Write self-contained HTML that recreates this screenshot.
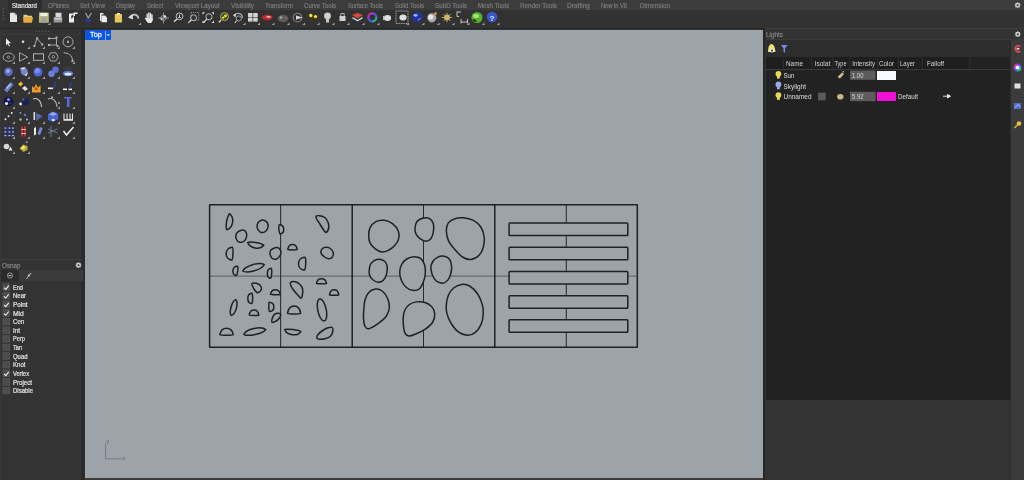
<!DOCTYPE html>
<html><head><meta charset="utf-8">
<style>
*{margin:0;padding:0;box-sizing:border-box}
html,body{width:1024px;height:480px;overflow:hidden;background:#333333;font-family:"Liberation Sans",sans-serif}
.abs{position:absolute}
#tabbar{left:0;top:0;width:1024px;height:10px;background:#3c3c3c}
#tabbar span{position:absolute;top:2.2px;font-size:7px;line-height:8px;white-space:nowrap;transform-origin:0 0;-webkit-text-stroke:0.2px currentColor}
#activetab{left:8.3px;top:0;width:33.5px;height:10px;background:#2e2e2e}
#tableft{left:0;top:0;width:8.3px;height:10px;background:#373737}
.t{position:absolute;font-size:7px;line-height:8px;white-space:nowrap;color:#d8d8d8;transform-origin:0 0;-webkit-text-stroke:0.15px currentColor}
#root{position:absolute;left:0;top:0;width:1024px;height:480px;overflow:hidden;will-change:transform}

</style></head><body><div id="root">
<div id="tabbar" class="abs"><div id="tableft" class="abs"></div><div id="activetab" class="abs"></div>
<span style="left:12px;color:#e0e0e0;transform:scaleX(0.880)">Standard</span>
<span style="left:48px;color:#7c7c7c;transform:scaleX(0.792)">CPlanes</span>
<span style="left:80px;color:#7c7c7c;transform:scaleX(0.909)">Set View</span>
<span style="left:116px;color:#7c7c7c;transform:scaleX(0.826)">Display</span>
<span style="left:147px;color:#7c7c7c;transform:scaleX(0.821)">Select</span>
<span style="left:175px;color:#7c7c7c;transform:scaleX(0.888)">Viewport Layout</span>
<span style="left:231px;color:#7c7c7c;transform:scaleX(0.913)">Visibility</span>
<span style="left:265px;color:#7c7c7c;transform:scaleX(0.886)">Transform</span>
<span style="left:304px;color:#7c7c7c;transform:scaleX(0.870)">Curve Tools</span>
<span style="left:348px;color:#7c7c7c;transform:scaleX(0.827)">Surface Tools</span>
<span style="left:395px;color:#7c7c7c;transform:scaleX(0.861)">Solid Tools</span>
<span style="left:435px;color:#7c7c7c;transform:scaleX(0.896)">SubD Tools</span>
<span style="left:478px;color:#7c7c7c;transform:scaleX(0.878)">Mesh Tools</span>
<span style="left:520px;color:#7c7c7c;transform:scaleX(0.900)">Render Tools</span>
<span style="left:567px;color:#7c7c7c;transform:scaleX(0.939)">Drafting</span>
<span style="left:601px;color:#7c7c7c;transform:scaleX(0.815)">New in V8</span>
<span style="left:640px;color:#7c7c7c;transform:scaleX(0.906)">Dimension</span>
</div>
<div class="abs" style="left:0;top:10px;width:1024px;height:18.5px;background:#323232"></div>
<div class="abs" style="left:0;top:28px;width:765px;height:1.2px;background:#272727"></div>
<div class="abs" style="left:765px;top:28px;width:259px;height:1.2px;background:#3d3d3d"></div>
<!-- left panel -->
<div class="abs" style="left:0;top:29px;width:83px;height:451px;background:#333333"></div>
<div class="abs" style="left:0;top:29px;width:1px;height:451px;background:#383838"></div>
<div class="abs" style="left:80.5px;top:29px;width:4.5px;height:451px;background:#2b2b2b"></div>
<div class="abs" style="left:1px;top:34.2px;width:79px;height:0.8px;background:#3a3a3a"></div>
<div class="abs" style="left:0;top:258.5px;width:83px;height:1px;background:#3d3d3d"></div>
<div class="t" style="left:2px;top:261.5px;color:#8a8a8a;transform:scaleX(0.9)">Osnap</div>
<div class="abs" style="left:1px;top:270px;width:18px;height:11px;background:#2b2b2b"></div>
<div class="abs" style="left:19px;top:270px;width:64px;height:11px;background:#3b3b3b"></div>
<!-- osnap list -->
<div id="osnap"></div>
<!-- viewport -->
<div class="abs" style="left:85px;top:29.6px;width:678.2px;height:448px;background:#9ca3a9"></div>
<div class="abs" style="left:85px;top:477.6px;width:678.2px;height:2.4px;background:#3a3a3a"></div>
<div class="abs" style="left:763.2px;top:29px;width:2.3px;height:451px;background:#262626"></div>
<div class="abs" style="left:85.3px;top:29.6px;width:25.8px;height:10.4px;background:#0b56e2;border-radius:0 0 1px 1px"></div>
<svg class="abs" style="left:0;top:0" width="120" height="45"><path d="M106.6 34.3 H110 L108.3 36.2 Z" fill="#e8f0ff"/></svg>
<div class="t" style="left:89.8px;top:30.8px;color:#e8efff;font-size:7.5px;transform:scaleX(0.98);-webkit-text-stroke:0.3px #e8efff">Top</div>
<div class="abs" style="left:105px;top:30.5px;width:0.7px;height:9px;background:#8fb0f0"></div>
<!-- right panel -->
<div class="abs" style="left:765.5px;top:29px;width:258.5px;height:11px;background:#333333"></div>
<div class="t" style="left:765.5px;top:30.5px;color:#8a8a8a;transform:scaleX(0.9)">Lights</div>
<div class="abs" style="left:765.5px;top:39.3px;width:258.5px;height:1px;background:#3c3c3c"></div>
<div class="abs" style="left:765.5px;top:40.3px;width:244.5px;height:17px;background:#2d2d2d"></div>
<div class="abs" style="left:765.5px;top:57.3px;width:244.5px;height:343px;background:#222222"></div>
<div class="abs" style="left:765.5px;top:57.3px;width:204px;height:12px;background:#1e1e1e"></div>
<div class="abs" style="left:765.5px;top:69.3px;width:244.5px;height:0.8px;background:#3a3a3a"></div>
<div class="abs" style="left:765.5px;top:400.3px;width:244.5px;height:80px;background:#333333"></div>
<div class="abs" style="left:1009.5px;top:40.3px;width:1.5px;height:440px;background:#2a2a2a"></div>
<div class="abs" style="left:1011px;top:40.3px;width:13px;height:440px;background:#3b3b3b"></div>
<div id="lights"></div>

<svg class="abs" style="left:0;top:0" width="1024" height="480" viewBox="0 0 1024 480">
<line x1="209.6" y1="276" x2="637.3" y2="276" stroke="#666c72" stroke-width="1.25"/>
<g stroke="#272c31" stroke-width="1.05" fill="none">
<line x1="280.6" y1="204.8" x2="280.6" y2="347.2"/>
<line x1="423.5" y1="204.8" x2="423.5" y2="347.2"/>
<line x1="566.3" y1="204.8" x2="566.3" y2="347.2"/>
</g>
<g stroke="#1d2227" stroke-width="1.5" fill="#9ca3a9" stroke-linejoin="round">
<rect x="209.6" y="204.8" width="427.7" height="142.45" fill="none"/>
<line x1="352.2" y1="204.8" x2="352.2" y2="347.25"/>
<line x1="494.8" y1="204.8" x2="494.8" y2="347.25"/>
<path d="M229.55 213.7 C227.01 216.56 225.3 226.19 226.7 229.75 C233.18 227.59 234.89 217.96 229.55 213.7 Z"/>
<path d="M238.25 231.7 C239.37 230.92 241.42 229.95 242.75 230.05 C244.07 230.15 245.57 231.17 246.2 232.3 C246.82 233.42 246.82 235.35 246.5 236.8 C246.17 238.25 245.42 240.1 244.25 241 C243.07 241.9 240.8 242.57 239.45 242.2 C238.1 241.82 236.72 240 236.15 238.75 C235.57 237.5 235.65 235.87 236 234.7 C236.35 233.52 237.12 232.47 238.25 231.7 Z"/>
<path d="M259.7 221.2 C260.77 220.47 262.45 219.85 263.75 220.15 C265.05 220.45 266.8 221.82 267.5 223 C268.2 224.17 268.25 225.82 267.95 227.2 C267.65 228.57 266.82 230.37 265.7 231.25 C264.57 232.12 262.55 232.82 261.2 232.45 C259.85 232.07 258.25 230.32 257.6 229 C256.95 227.67 256.95 225.8 257.3 224.5 C257.65 223.2 258.62 221.92 259.7 221.2 Z"/>
<path d="M247.7 242.5 C249.98 248.56 259.61 250.18 263.75 245.2 C260.83 242.95 251.2 241.33 247.7 242.5 Z"/>
<path d="M232.5 247.3 C224.48 247.51 223.85 259.12 231.8 260.2 C232.9 259.61 233.53 248 232.5 247.3 Z"/>
<path d="M272.75 248.8 C273.87 248.27 275.95 247.32 277.25 247.6 C278.55 247.87 280.05 249.17 280.55 250.45 C281.05 251.72 280.92 253.82 280.25 255.25 C279.57 256.67 277.87 258.5 276.5 259 C275.12 259.5 273.07 259.05 272 258.25 C270.92 257.45 270.3 255.45 270.05 254.2 C269.8 252.95 270.05 251.65 270.5 250.75 C270.95 249.85 271.62 249.32 272.75 248.8 Z"/>
<path d="M242.75 271 C247.09 273.89 262.11 269.48 264.2 264.7 C259.74 261.42 244.73 265.83 242.75 271 Z"/>
<path d="M237.5 266.2 C232.15 265.98 231.07 274.35 236.3 275.5 C237.42 275.17 238.5 266.8 237.5 266.2 Z"/>
<path d="M271.2 268.3 C266.51 268.47 265.88 277.47 270.5 278.3 C271.6 277.87 272.23 268.87 271.2 268.3 Z"/>
<path d="M279.3 224.8 C278.28 225.36 279.09 233.64 280.2 234 C285.46 233.02 284.65 224.74 279.3 224.8 Z"/>
<path d="M316 216.25 C316.5 215.67 318.25 215.55 319.75 215.8 C321.25 216.05 323.62 216.67 325 217.75 C326.37 218.82 327.37 220.62 328 222.25 C328.62 223.87 329.05 225.8 328.75 227.5 C328.45 229.2 327.07 232.07 326.2 232.45 C325.32 232.82 324.57 231.2 323.5 229.75 C322.42 228.3 320.87 225.5 319.75 223.75 C318.62 222 317.37 220.5 316.75 219.25 C316.12 218 315.5 216.82 316 216.25 Z"/>
<path d="M287.8 249.4 C288.75 250.07 296.31 250.07 297.25 249.4 C296.31 242.73 288.75 242.73 287.8 249.4 Z"/>
<path d="M322.3 248.8 C323.1 247.9 324.42 247.35 325.75 247.3 C327.07 247.25 329 247.6 330.25 248.5 C331.5 249.4 332.92 251.25 333.25 252.7 C333.57 254.15 332.95 256.2 332.2 257.2 C331.45 258.2 330.07 258.77 328.75 258.7 C327.42 258.62 325.55 257.75 324.25 256.75 C322.95 255.75 321.27 254.02 320.95 252.7 C320.62 251.37 321.5 249.7 322.3 248.8 Z"/>
<path d="M304.8 257.3 C296.78 257.57 296.24 269.18 304.2 270.2 C305.83 269.63 306.37 258.02 304.8 257.3 Z"/>
<path d="M252.05 283.55 C252.62 282.97 254.92 282.97 256.25 283.25 C257.57 283.52 259.12 284.32 260 285.2 C260.87 286.07 261.5 287.45 261.5 288.5 C261.5 289.55 260.7 290.8 260 291.5 C259.3 292.2 258.17 292.95 257.3 292.7 C256.42 292.45 255.5 291 254.75 290 C254 289 253.25 287.77 252.8 286.7 C252.35 285.62 251.47 284.12 252.05 283.55 Z"/>
<path d="M270.5 294.2 C271.46 294.89 279.26 295.05 280.25 294.4 C279.4 288.25 271.6 288.09 270.5 294.2 Z"/>
<path d="M251.8 293.3 C246.47 293.81 246.47 302.99 251.8 303.5 C252.87 302.99 252.87 293.81 251.8 293.3 Z"/>
<path d="M235.7 299.6 C231.82 301.1 228.67 312.3 231.2 315.6 C235.73 314.28 238.88 303.08 235.7 299.6 Z"/>
<path d="M269.2 302.3 C268.42 302.8 268.78 311.17 269.6 311.6 C275.57 310.88 275.21 302.51 269.2 302.3 Z"/>
<path d="M249.2 315 C250.15 315.68 257.83 315.76 258.8 315.1 C257.91 308.42 250.23 308.34 249.2 315 Z"/>
<path d="M272 322.25 C271.37 321.62 272.25 318.37 272.75 317 C273.25 315.62 274 314.62 275 314 C276 313.37 277.8 313.12 278.75 313.25 C279.7 313.37 280.57 314 280.7 314.75 C280.82 315.5 280.2 316.75 279.5 317.75 C278.8 318.75 277.75 320 276.5 320.75 C275.25 321.5 272.62 322.87 272 322.25 Z"/>
<path d="M219.8 334.6 C221.42 335.4 231.68 335.4 233.3 334.6 C231.68 326.2 221.42 326.2 219.8 334.6 Z"/>
<path d="M243.8 334.3 C247.81 336.98 263.14 333.69 265.7 329.6 C261.41 325.61 246.08 328.9 243.8 334.3 Z"/>
<path d="M290.5 282.5 C291.2 281.87 293.5 281.5 295 281.75 C296.5 282 298.25 282.87 299.5 284 C300.75 285.12 302 286.75 302.5 288.5 C303 290.25 302.75 292.87 302.5 294.5 C302.25 296.12 301.75 298.12 301 298.25 C300.25 298.37 299.25 296.62 298 295.25 C296.75 293.87 294.7 291.62 293.5 290 C292.3 288.37 291.3 286.75 290.8 285.5 C290.3 284.25 289.8 283.12 290.5 282.5 Z"/>
<path d="M316.5 283.3 C317.5 283.97 325.5 283.97 326.5 283.3 C325.5 277.17 317.5 277.17 316.5 283.3 Z"/>
<path d="M329.5 294.8 C330.43 295.47 337.87 295.47 338.8 294.8 C337.87 288.13 330.43 288.13 329.5 294.8 Z"/>
<path d="M326.11 309.03 L326.38 310.46 L326.57 311.89 L326.69 313.29 L326.72 314.62 L326.68 315.88 L326.55 317.03 L326.35 318.06 L326.07 318.95 L325.72 319.69 L325.31 320.26 L324.84 320.65 L324.33 320.86 L323.77 320.88 L323.19 320.71 L322.58 320.36 L321.96 319.82 L321.35 319.12 L320.74 318.26 L320.16 317.26 L319.61 316.13 L319.1 314.9 L318.63 313.58 L318.23 312.2 L317.89 310.77 L317.62 309.34 L317.43 307.91 L317.31 306.51 L317.28 305.18 L317.32 303.92 L317.45 302.77 L317.65 301.74 L317.93 300.85 L318.28 300.11 L318.69 299.54 L319.16 299.15 L319.67 298.94 L320.23 298.92 L320.81 299.09 L321.42 299.44 L322.04 299.98 L322.65 300.68 L323.26 301.54 L323.84 302.54 L324.39 303.67 L324.9 304.9 L325.37 306.22 L325.77 307.6 Z"/>
<path d="M287.5 313.3 C289.08 314.1 299.12 314.1 300.7 313.3 C299.12 303.7 289.08 303.7 287.5 313.3 Z"/>
<path d="M284.8 329.5 C286.47 335.37 297.67 336.84 300.8 331.6 C298.57 329.96 287.37 328.49 284.8 329.5 Z"/>
<path d="M316.75 338 C316.5 337.17 317.25 335.5 318.25 334.25 C319.25 333 321.12 331.57 322.75 330.5 C324.37 329.42 326.42 328.3 328 327.8 C329.57 327.3 331.4 326.92 332.2 327.5 C333 328.07 333.12 329.75 332.8 331.25 C332.47 332.75 331.55 335.25 330.25 336.5 C328.95 337.75 326.75 338.3 325 338.75 C323.25 339.2 321.12 339.32 319.75 339.2 C318.37 339.07 317 338.82 316.75 338 Z"/>
<path d="M368.67 235.33 C368.67 232.83 368.81 230.11 370 227.83 C371.19 225.56 373.47 222.92 375.83 221.67 C378.19 220.42 381.39 220 384.17 220.33 C386.94 220.67 390.14 221.86 392.5 223.67 C394.86 225.47 397.31 228.67 398.33 231.17 C399.36 233.67 399.22 236.31 398.67 238.67 C398.11 241.03 396.72 243.39 395 245.33 C393.28 247.28 390.56 249.22 388.33 250.33 C386.11 251.44 383.89 252.28 381.67 252 C379.44 251.72 376.94 250.19 375 248.67 C373.06 247.14 371.06 245.06 370 242.83 C368.94 240.61 368.67 237.83 368.67 235.33 Z"/>
<path d="M415 228.67 C415.14 226.72 415.42 223.72 416.67 222 C417.92 220.28 420.42 218.94 422.5 218.33 C424.58 217.72 427.36 217.44 429.17 218.33 C430.97 219.22 432.64 221.39 433.33 223.67 C434.03 225.94 433.75 229.5 433.33 232 C432.92 234.5 432.08 237.14 430.83 238.67 C429.58 240.19 427.64 241.17 425.83 241.17 C424.03 241.17 421.67 239.92 420 238.67 C418.33 237.42 416.67 235.33 415.83 233.67 C415 232 414.86 230.61 415 228.67 Z"/>
<path d="M369.17 270.33 C369.36 268.39 369.58 265.47 370.83 263.67 C372.08 261.86 374.58 260.06 376.67 259.5 C378.75 258.94 381.61 259.36 383.33 260.33 C385.06 261.31 386.44 263.11 387 265.33 C387.56 267.56 387.28 271.17 386.67 273.67 C386.06 276.17 384.72 278.89 383.33 280.33 C381.94 281.78 380.14 282.47 378.33 282.33 C376.53 282.19 373.94 280.67 372.5 279.5 C371.06 278.33 370.22 276.86 369.67 275.33 C369.11 273.81 368.97 272.28 369.17 270.33 Z"/>
<path d="M399.67 272 C399.72 269.36 400.5 266.67 401.67 264.5 C402.83 262.33 404.58 260.31 406.67 259 C408.75 257.69 411.81 256.72 414.17 256.67 C416.53 256.61 419.08 257.22 420.83 258.67 C422.58 260.11 423.92 262.83 424.67 265.33 C425.42 267.83 425.56 270.89 425.33 273.67 C425.11 276.44 424.36 279.44 423.33 282 C422.31 284.56 420.97 287.61 419.17 289 C417.36 290.39 414.72 290.67 412.5 290.33 C410.28 290 407.69 288.67 405.83 287 C403.97 285.33 402.36 282.83 401.33 280.33 C400.31 277.83 399.61 274.64 399.67 272 Z"/>
<path d="M446.33 230.33 C446.33 227.42 446.89 224.78 448.33 222.83 C449.78 220.89 452.5 219.5 455 218.67 C457.5 217.83 460.28 217.56 463.33 217.83 C466.39 218.11 470.42 218.81 473.33 220.33 C476.25 221.86 479.03 224.22 480.83 227 C482.64 229.78 483.75 233.67 484.17 237 C484.58 240.33 484.17 243.94 483.33 247 C482.5 250.06 481.25 253.25 479.17 255.33 C477.08 257.42 473.61 259.22 470.83 259.5 C468.06 259.78 465.28 258.81 462.5 257 C459.72 255.19 456.53 251.44 454.17 248.67 C451.81 245.89 449.64 243.39 448.33 240.33 C447.03 237.28 446.33 233.25 446.33 230.33 Z"/>
<path d="M430.83 268.67 C430.56 265.89 431.39 263.89 432.5 262 C433.61 260.11 435.56 258.31 437.5 257.33 C439.44 256.36 442.14 255.81 444.17 256.17 C446.19 256.53 448.42 257.69 449.67 259.5 C450.92 261.31 451.61 264.22 451.67 267 C451.72 269.78 450.97 273.67 450 276.17 C449.03 278.67 447.5 280.89 445.83 282 C444.17 283.11 441.94 283.39 440 282.83 C438.06 282.28 435.69 281.03 434.17 278.67 C432.64 276.31 431.11 271.44 430.83 268.67 Z"/>
<path d="M363.75 310 C364 306.88 364.17 302.92 365 300 C365.83 297.08 366.98 294.33 368.75 292.5 C370.52 290.67 373.33 289.21 375.62 289 C377.92 288.79 380.48 289.62 382.5 291.25 C384.52 292.88 386.6 296.04 387.75 298.75 C388.9 301.46 389.62 304.58 389.38 307.5 C389.12 310.42 388.02 313.65 386.25 316.25 C384.48 318.85 381.67 321.04 378.75 323.12 C375.83 325.21 371.04 328.23 368.75 328.75 C366.46 329.27 365.88 327.92 365 326.25 C364.12 324.58 363.71 321.46 363.5 318.75 C363.29 316.04 363.5 313.12 363.75 310 Z"/>
<path d="M403.12 320 C403.06 316.46 403.44 313.75 404.38 311.25 C405.31 308.75 406.77 306.56 408.75 305 C410.73 303.44 413.54 302.29 416.25 301.88 C418.96 301.46 422.4 301.67 425 302.5 C427.6 303.33 430.25 305 431.88 306.88 C433.5 308.75 434.65 311.15 434.75 313.75 C434.85 316.35 434.12 319.9 432.5 322.5 C430.88 325.1 427.71 327.5 425 329.38 C422.29 331.25 418.96 332.65 416.25 333.75 C413.54 334.85 410.67 336.21 408.75 336 C406.83 335.79 405.69 335.17 404.75 332.5 C403.81 329.83 403.19 323.54 403.12 320 Z"/>
<path d="M446.33 304.67 C446.6 301.78 447.11 298.11 448.33 295.33 C449.56 292.56 451.44 289.82 453.67 288 C455.89 286.18 459 284.73 461.67 284.4 C464.33 284.07 467 284.4 469.67 286 C472.33 287.6 475.56 290.89 477.67 294 C479.78 297.11 481.4 301.33 482.33 304.67 C483.27 308 483.49 310.67 483.27 314 C483.04 317.33 482.38 321.56 481 324.67 C479.62 327.78 477.33 330.89 475 332.67 C472.67 334.44 469.89 335.56 467 335.33 C464.11 335.11 460.44 333.56 457.67 331.33 C454.89 329.11 452.16 325.11 450.33 322 C448.51 318.89 447.4 315.56 446.73 312.67 C446.07 309.78 446.07 307.56 446.33 304.67 Z"/>
<rect x="509.1" y="223.0" width="118.7" height="12.5" rx="0.8"/>
<rect x="509.1" y="247.3" width="118.7" height="12.5" rx="0.8"/>
<rect x="509.1" y="271.5" width="118.7" height="12.5" rx="0.8"/>
<rect x="509.1" y="295.7" width="118.7" height="12.5" rx="0.8"/>
<rect x="509.1" y="319.8" width="118.7" height="12.5" rx="0.8"/>
</g>
<g stroke="#6a7076" stroke-width="0.8" fill="none"><polyline points="105.6,443.5 105.6,458.8 121.3,458.8"/></g>
<text x="106.3" y="442.5" font-size="6" fill="#60666c" font-family="Liberation Sans">y</text>
<text x="122.2" y="459.8" font-size="6" fill="#60666c" font-family="Liberation Sans">x</text>
</svg>
<svg class="abs" style="left:0;top:0" width="1024" height="480" viewBox="0 0 1024 480">
<defs><linearGradient id="cw" x1="0" y1="0" x2="1" y2="1"><stop offset="0" stop-color="#f03030"/><stop offset="0.3" stop-color="#a030f0"/><stop offset="0.6" stop-color="#3060f0"/><stop offset="1" stop-color="#30e060"/></linearGradient></defs>
<rect x="2.7" y="8.2" width="1.3" height="1.3" fill="#5e5e5e"/>
<rect x="2.7" y="11.6" width="1.3" height="1.3" fill="#5e5e5e"/>
<rect x="2.7" y="15" width="1.3" height="1.3" fill="#5e5e5e"/>
<rect x="2.7" y="18.4" width="1.3" height="1.3" fill="#5e5e5e"/>
<path d="M10 12.7 H14.5 L17 15.2 V22 H10 Z" fill="#e6e6e6"/>
<path d="M14.5 12.7 V15.2 H17" fill="#b0b0b0"/>
<path d="M23.5 14.8 H27 L28 15.8 H32 V17 H23.5 Z" fill="#d9cf8a"/>
<path d="M23 17 H33 L32 22.7 H23.5 Z" fill="#e6ad3c"/>
<rect x="39" y="12.5" width="9.8" height="10.2" fill="#b8b87a"/>
<rect x="40.3" y="13" width="7.2" height="3" fill="#f0f0e0"/>
<rect x="41" y="17.5" width="5.8" height="5" fill="#a0a0a0"/>
<path d="M50.50 25.00 L47.90 25.00 L50.50 22.40 Z" fill="#a8a8a8"/>
<rect x="55.5" y="12.7" width="6" height="4.5" fill="#d8d8d8"/>
<rect x="53.7" y="17" width="8.5" height="5.5" fill="#9a9a9a"/>
<rect x="54.5" y="18" width="7" height="1.5" fill="#cfcfcf"/>
<path d="M69 13.5 H73.5 V12.5 H77.5 V14 H75 V16 H74 V22.5 H69 Z" fill="#eeeeee"/>
<path d="M71 16 L73.5 14.5 V17 L71.5 19 Z" fill="#444"/>
<path d="M85.5 13 L88.3 18 L91.5 13" stroke="#b0b0b0" stroke-width="1.1" fill="none"/>
<ellipse cx="88.3" cy="20.5" rx="3" ry="1.9" fill="#2b3c8a"/>
<path d="M100 13 H103.5 V14.5 H101.5 V21 H100 Z" fill="#e8e8e8"/>
<path d="M101.5 15.5 H105 L107 17.5 V22.2 H101.5 Z" fill="#e8ece6"/>
<rect x="114.8" y="14" width="7.2" height="8.5" rx="0.6" fill="#e6c85a"/>
<rect x="116.8" y="13" width="3.2" height="2" fill="#f0e4b0"/>
<path d="M131 16.5 C133 13.5 137.5 13.8 138.5 18.5" stroke="#bdbdbd" stroke-width="1.8" fill="none"/>
<path d="M128 17.5 L132.5 14 L133 19.5 Z" fill="#e0e0e0"/>
<path d="M141.00 25.00 L138.40 25.00 L141.00 22.40 Z" fill="#a8a8a8"/>
<path d="M145.5 18.5 L147.2 20 V14.2 M148.9 19 V12.8 M150.5 19 V13.3 M152 19.5 V15" stroke="#e8e8e8" stroke-width="1.35" stroke-linecap="round" fill="none"/>
<path d="M146.6 18.5 H152.7 V20.5 L151.2 23 H148 L146 20.5 Z" fill="#e8e8e8"/>
<path d="M163.5 12.5 V23.5 M158 18 H169" stroke="#8f8f8f" stroke-width="1" fill="none"/>
<circle cx="163.5" cy="18" r="2.6" fill="none" stroke="#a0a0a0" stroke-width="0.9"/>
<circle cx="165" cy="16.5" r="1.2" fill="#e0e0e0"/><circle cx="161.5" cy="19" r="1" fill="#e0e0e0"/>
<circle cx="179.5" cy="16.3" r="3.4" fill="none" stroke="#c8c8c8" stroke-width="1"/>
<path d="M177 19 L174 21.8" stroke="#dcdcdc" stroke-width="1.4"/>
<path d="M179.5 14.5 V17 M178.3 17.5 H180.7" stroke="#dcdcdc" stroke-width="0.9"/>
<rect x="191" y="12.5" width="7.8" height="7.8" fill="none" stroke="#9a9a9a" stroke-width="0.8" stroke-dasharray="1.2 0.8"/>
<circle cx="193.5" cy="17.8" r="3" fill="none" stroke="#b8b8b8" stroke-width="1"/>
<path d="M191.3 20 L188.3 22.8" stroke="#d0d0d0" stroke-width="1.3"/>
<path d="M202.5 12.2 L205.0 12.2 L202.5 14.7 Z" fill="#e8e8e8"/>
<path d="M214 12.2 L211.5 12.2 L214 14.7 Z" fill="#e8e8e8"/>
<path d="M202.5 23 L205.0 23 L202.5 20.5 Z" fill="#e8e8e8"/>
<path d="M214 23 L211.5 23 L214 20.5 Z" fill="#e8e8e8"/>
<circle cx="209" cy="16.8" r="3.1" fill="none" stroke="#b8b8b8" stroke-width="1"/>
<path d="M206.7 19.2 L204 22" stroke="#d0d0d0" stroke-width="1.3"/>
<circle cx="224.5" cy="16.6" r="4" fill="#4a4a28" stroke="#b8b060" stroke-width="0.9"/>
<circle cx="225.5" cy="15.8" r="1.4" fill="#e8f030"/><circle cx="223.3" cy="17.6" r="1.2" fill="#e8f030"/>
<path d="M221.2 20 L218.8 22.5" stroke="#d0d0d0" stroke-width="1.3"/>
<path d="M234 16 C236 12 242 12.5 242.5 18" stroke="#a8a8a8" stroke-width="1.2" fill="none"/>
<path d="M233 15 L236 13.5 L235.5 17.5 Z" fill="#dcdcdc"/>
<circle cx="238.8" cy="18.5" r="2.6" fill="none" stroke="#9aa0a8" stroke-width="1"/>
<path d="M236.8 20.5 L234.8 23" stroke="#c0c0c0" stroke-width="1.2"/>
<path d="M245.50 25.00 L242.90 25.00 L245.50 22.40 Z" fill="#a8a8a8"/>
<rect x="248" y="13" width="4.5" height="4" fill="#d4d4d4"/>
<rect x="253.2" y="13" width="4.5" height="4" fill="#d4d4d4"/>
<rect x="248" y="17.6" width="4.5" height="4" fill="#d4d4d4"/>
<rect x="253.2" y="17.6" width="4.5" height="4" fill="#d4d4d4"/>
<path d="M260.00 25.00 L257.40 25.00 L260.00 22.40 Z" fill="#a8a8a8"/>
<ellipse cx="267.3" cy="17.6" rx="5.4" ry="2.8" fill="#b8282c"/>
<ellipse cx="268.5" cy="16.8" rx="2.5" ry="1.1" fill="#f0a0a0"/>
<path d="M274.50 25.00 L271.90 25.00 L274.50 22.40 Z" fill="#a8a8a8"/>
<ellipse cx="283" cy="18.5" rx="5.3" ry="3.8" fill="#5a5a5a"/>
<circle cx="281" cy="17.5" r="1.5" fill="#9a9a9a"/><circle cx="285.5" cy="18" r="1.2" fill="#8a6060"/>
<path d="M289.50 25.00 L286.90 25.00 L289.50 22.40 Z" fill="#a8a8a8"/>
<circle cx="297.5" cy="17.6" r="4.3" fill="none" stroke="#777" stroke-width="1.3"/>
<path d="M296 15.5 L302.5 17.6 L296 19.7 Z" fill="#d8d8d8"/>
<path d="M305.00 25.00 L302.40 25.00 L305.00 22.40 Z" fill="#a8a8a8"/>
<ellipse cx="313" cy="18" rx="5" ry="4.5" fill="#3a3520"/>
<circle cx="310.8" cy="15.5" r="1.7" fill="#f0e030"/><circle cx="315.5" cy="16.6" r="1.7" fill="#f0e030"/>
<path d="M319.50 25.00 L316.90 25.00 L319.50 22.40 Z" fill="#a8a8a8"/>
<circle cx="327.5" cy="16" r="3.4" fill="#d0d0d0"/>
<rect x="326" y="18.5" width="3" height="4" fill="#c8c8c8"/>
<path d="M334.50 25.00 L331.90 25.00 L334.50 22.40 Z" fill="#a8a8a8"/>
<rect x="339.5" y="16" width="6" height="5" fill="#d0d0d0"/>
<path d="M340.8 16 V13.5 H344.2 V16" stroke="#b0b0b0" stroke-width="1" fill="none"/>
<path d="M349.50 25.00 L346.90 25.00 L349.50 22.40 Z" fill="#a8a8a8"/>
<path d="M352 15 L357.5 13 L363 15 L357.5 18.5 Z" fill="#d84a38"/>
<path d="M352.5 17 L357.5 20 L362.5 17 L362.5 18.5 L357.5 21.3 L352.5 18.5 Z" fill="#e8e8e8"/><path d="M353.5 19.5 L357.5 21.8 L361.5 19.5 V20.8 L357.5 22.5 L353.5 20.8 Z" fill="#2a3a80"/>
<path d="M364.50 25.00 L361.90 25.00 L364.50 22.40 Z" fill="#a8a8a8"/>
<circle cx="372.3" cy="17.3" r="4" fill="none" stroke="url(#cw)" stroke-width="2.2"/>
<path d="M379.50 25.00 L376.90 25.00 L379.50 22.40 Z" fill="#a8a8a8"/>
<ellipse cx="387.5" cy="18" rx="3.6" ry="3" fill="#e0e0e0"/>
<rect x="383" y="16" width="1.5" height="4" fill="#c0c0c0"/>
<rect x="396" y="11" width="12" height="12.5" fill="none" stroke="#b8b8b8" stroke-width="0.9" stroke-dasharray="1 0.7"/>
<ellipse cx="403" cy="17.5" rx="3.6" ry="3" fill="#e0e0e0"/>
<path d="M409.00 25.00 L406.40 25.00 L409.00 22.40 Z" fill="#a8a8a8"/>
<circle cx="417.2" cy="17" r="5.3" fill="#1f339a"/>
<ellipse cx="415.5" cy="15.3" rx="2" ry="1.4" fill="#a8b8f0"/>
<path d="M418 20 L420.5 18.5" stroke="#c0c8f0" stroke-width="0.8"/>
<path d="M424.50 25.00 L421.90 25.00 L424.50 22.40 Z" fill="#a8a8a8"/>
<circle cx="431.8" cy="17.8" r="4.6" fill="#a8a8a8"/>
<circle cx="430.8" cy="17" r="2.6" fill="#e8e8e8"/>
<circle cx="435.5" cy="13.5" r="1.6" fill="#d08a30"/>
<path d="M439.50 25.00 L436.90 25.00 L439.50 22.40 Z" fill="#a8a8a8"/>
<circle cx="447" cy="17.5" r="2.8" fill="#d8c890"/>
<path d="M441.8 17.5 H452.2 M447 12.8 V22.2 M443.5 14 L450.5 21 M450.5 14 L443.5 21" stroke="#c8b060" stroke-width="0.9"/>
<path d="M454.50 25.00 L451.90 25.00 L454.50 22.40 Z" fill="#a8a8a8"/>
<path d="M457 11.5 V16.5 M457 12 H461 M457 16.5 H459 M461 19 V23.5 M461 22 H467.5 M467.5 19 V23.5" stroke="#d0d0d0" stroke-width="0.9" fill="none"/>
<path d="M469.50 25.00 L466.90 25.00 L469.50 22.40 Z" fill="#a8a8a8"/>
<circle cx="477" cy="17.5" r="5.5" fill="#58b030"/>
<ellipse cx="476" cy="16" rx="3" ry="2" fill="#a8e080"/>
<path d="M472 19.5 Q474 22 477 22 L475 19.5 Z" fill="#101810"/>
<path d="M484.50 25.00 L481.90 25.00 L484.50 22.40 Z" fill="#a8a8a8"/>
<circle cx="492" cy="17" r="5.3" fill="#3a58c8"/>
<text x="489.6" y="20.5" font-size="8" font-weight="bold" fill="#e8eeff" font-family="Liberation Sans">?</text>
<path d="M499.50 25.00 L496.90 25.00 L499.50 22.40 Z" fill="#a8a8a8"/>
<rect x="36" y="30.8" width="1.2" height="1.2" fill="#555"/>
<rect x="39" y="30.8" width="1.2" height="1.2" fill="#555"/>
<rect x="42" y="30.8" width="1.2" height="1.2" fill="#555"/>
<rect x="45" y="30.8" width="1.2" height="1.2" fill="#555"/>
<rect x="48" y="30.8" width="1.2" height="1.2" fill="#555"/>
<path d="M6 38.3 L11 43 L8.6 43.3 L10 46 L9 46.5 L7.8 43.8 L6 45.5 Z" fill="#eeeeee"/>
<circle cx="23" cy="41.8" r="1.3" fill="#dddddd"/>
<polyline points="34.4,46 37.1,38.3 42.2,44.5" fill="none" stroke="#b4b4b4" stroke-width="0.9"/>
<rect x="33.4" y="45" width="2" height="2" fill="#b4b4b4"/>
<rect x="36.1" y="37.3" width="2" height="2" fill="#b4b4b4"/>
<rect x="41.2" y="43.5" width="2" height="2" fill="#b4b4b4"/>
<path d="M49 38.5 H56.5 V45 H49" fill="none" stroke="#b4b4b4" stroke-width="0.9"/>
<rect x="48" y="37.5" width="2" height="2" fill="#b4b4b4"/>
<rect x="55.5" y="36.5" width="2" height="2" fill="#b4b4b4"/>
<rect x="48" y="44" width="2" height="2" fill="#b4b4b4"/>
<rect x="56.5" y="45" width="2" height="2" fill="#b4b4b4"/>
<circle cx="68" cy="41.8" r="5" fill="none" stroke="#b4b4b4" stroke-width="0.9"/>
<rect x="67" y="40.8" width="2" height="2" fill="#b4b4b4"/>
<path d="M30.00 49.00 L27.20 49.00 L30.00 46.20 Z" fill="#9c9c9c"/>
<path d="M45.00 49.00 L42.20 49.00 L45.00 46.20 Z" fill="#9c9c9c"/>
<path d="M60.00 49.00 L57.20 49.00 L60.00 46.20 Z" fill="#9c9c9c"/>
<path d="M75.00 49.00 L72.20 49.00 L75.00 46.20 Z" fill="#9c9c9c"/>
<ellipse cx="8.7" cy="57.2" rx="5.6" ry="4.2" fill="none" stroke="#b4b4b4" stroke-width="0.9"/>
<circle cx="8.5" cy="57.2" r="1.2" fill="none" stroke="#b4b4b4" stroke-width="0.7"/>
<path d="M19.5 52.7 L27.7 57 L19.5 61.3 Z" fill="none" stroke="#b4b4b4" stroke-width="0.9"/>
<rect x="33.5" y="53.8" width="10" height="6.5" fill="none" stroke="#b4b4b4" stroke-width="1"/>
<path d="M50.8 52.8 H55.8 L58.2 56.9 L55.8 61 H50.8 L48.4 56.9 Z" fill="none" stroke="#b4b4b4" stroke-width="0.9"/>
<circle cx="53.3" cy="56.9" r="1.4" fill="none" stroke="#b4b4b4" stroke-width="0.7"/>
<path d="M63.7 52.8 C68 52.8 72.5 55 72.5 61" fill="none" stroke="#b4b4b4" stroke-width="1"/>
<rect x="71.5" y="60" width="2" height="2" fill="#b4b4b4"/>
<path d="M15.00 64.00 L12.20 64.00 L15.00 61.20 Z" fill="#9c9c9c"/>
<path d="M30.00 64.00 L27.20 64.00 L30.00 61.20 Z" fill="#9c9c9c"/>
<path d="M45.00 64.00 L42.20 64.00 L45.00 61.20 Z" fill="#9c9c9c"/>
<path d="M60.00 64.00 L57.20 64.00 L60.00 61.20 Z" fill="#9c9c9c"/>
<path d="M75.00 64.00 L72.20 64.00 L75.00 61.20 Z" fill="#9c9c9c"/>
<circle cx="8.5" cy="71.8" r="4.3" fill="#5a6cc0"/><circle cx="8" cy="71" r="2" fill="#9aa8e8"/>
<path d="M20 68 L26 67.5 L28 72 L26 76.5 L21.5 74 Z" fill="#7f86c8"/><path d="M20 68 L25 67.3 L24 69.5 Z" fill="#f0f0f0"/><path d="M25 75 L28 72.5 L26.5 76 Z" fill="#f0f0f0"/>
<circle cx="38" cy="72" r="4.5" fill="#4f66d8"/><circle cx="37.3" cy="70.8" r="2.5" fill="#7a90f0"/>
<circle cx="55.5" cy="69.8" r="3.2" fill="#5a70d8"/><circle cx="51.5" cy="73.8" r="3.2" fill="#6a80e0"/>
<ellipse cx="68" cy="68.5" rx="4.5" ry="2.5" fill="#3a3a40"/><ellipse cx="68" cy="73.5" rx="5.3" ry="2.8" fill="#5a70d0"/><ellipse cx="68" cy="74" rx="3.5" ry="1.5" fill="#e0e8ff"/>
<path d="M15.00 79.00 L12.20 79.00 L15.00 76.20 Z" fill="#9c9c9c"/>
<path d="M30.00 79.00 L27.20 79.00 L30.00 76.20 Z" fill="#9c9c9c"/>
<path d="M45.00 79.00 L42.20 79.00 L45.00 76.20 Z" fill="#9c9c9c"/>
<path d="M60.00 79.00 L57.20 79.00 L60.00 76.20 Z" fill="#9c9c9c"/>
<path d="M75.00 79.00 L72.20 79.00 L75.00 76.20 Z" fill="#9c9c9c"/>
<path d="M4 90 L10.5 82 L13.5 84.5 L7 92.5 Z" fill="#6a7ed0"/><path d="M6 88 L10 83.5 L11 84.5 L7 89 Z" fill="#b0c0f0"/>
<path d="M18 84 L21 81.5 L23 84 L20.5 86.5 Z" fill="#e8c030"/><path d="M22 88 L25 86 L28 89 L25 91 Z" fill="#e8d8f0"/>
<path d="M32 92.5 L32 86 L34 88 L36 84 L38 87.5 L40.6 85.5 L40.6 92.5 Z" fill="#e8a030"/><path d="M34.5 90 L36 86.5 L38 89.5 Z" fill="#c83a18"/>
<rect x="48" y="87.5" width="5" height="1.6" fill="#eeeeee"/><path d="M55.5 81.5 L54 88.5" stroke="#3040a0" stroke-width="1.5"/>
<rect x="63" y="88.5" width="4" height="1.6" fill="#eeeeee"/><rect x="68.5" y="88.5" width="3.5" height="1.6" fill="#eeeeee"/><path d="M71 82 L69.5 88.5" stroke="#3040a0" stroke-width="1.5"/>
<path d="M15.00 94.00 L12.20 94.00 L15.00 91.20 Z" fill="#9c9c9c"/>
<path d="M30.00 94.00 L27.20 94.00 L30.00 91.20 Z" fill="#9c9c9c"/>
<path d="M45.00 94.00 L42.20 94.00 L45.00 91.20 Z" fill="#9c9c9c"/>
<path d="M60.00 94.00 L57.20 94.00 L60.00 91.20 Z" fill="#9c9c9c"/>
<path d="M75.00 94.00 L72.20 94.00 L75.00 91.20 Z" fill="#9c9c9c"/>
<circle cx="8.5" cy="101.5" r="4.8" fill="#10184a"/><circle cx="8.5" cy="99.5" r="1.6" fill="#8890d8"/><circle cx="6.5" cy="103.5" r="1.6" fill="#f0f0f0"/><circle cx="10.5" cy="103.2" r="1.3" fill="#203080"/>
<circle cx="25.5" cy="101.5" r="3.5" fill="#1a2058"/><circle cx="23.5" cy="99.5" r="1.2" fill="#5060a0"/><circle cx="20.6" cy="104" r="1.4" fill="#f0f0f0"/>
<path d="M33 99 C37 97.5 41 100 41.5 107" fill="none" stroke="#c8c8c8" stroke-width="1.1"/>
<path d="M48 99 C52 97.5 56.5 100 57 107" fill="none" stroke="#b8b8b8" stroke-width="1.1"/><rect x="51" y="96.5" width="2" height="1.5" fill="#b0b0b0"/><rect x="58" y="102" width="2" height="2" fill="#909090"/>
<path d="M64 97 H71.5 V98.5 H69.5 V107 H67 V98.5 H64 Z" fill="#5a6ad8"/>
<path d="M15.00 109.00 L12.20 109.00 L15.00 106.20 Z" fill="#9c9c9c"/>
<path d="M60.00 109.00 L57.20 109.00 L60.00 106.20 Z" fill="#9c9c9c"/>
<path d="M75.00 109.00 L72.20 109.00 L75.00 106.20 Z" fill="#9c9c9c"/>
<circle cx="5.5" cy="119.3" r="1" fill="#e8e8e8"/>
<circle cx="8.5" cy="116.3" r="1" fill="#e8e8e8"/>
<circle cx="11.7" cy="113" r="1" fill="#e8e8e8"/>
<circle cx="20.5" cy="113" r="1" fill="#8890c0"/><circle cx="25" cy="115" r="1.2" fill="#6a78d0"/><circle cx="27" cy="119.5" r="1.1" fill="#9aa8f0"/><circle cx="20.5" cy="119.5" r="1.2" fill="#90c890"/>
<rect x="33.5" y="112" width="1.6" height="8" fill="#dedede"/><path d="M36 113 L42.5 116 L36.5 121 Z" fill="#5a68b8"/>
<path d="M48 114 L53 111.5 L58.2 113.5 L58.2 119 L53 122 L48 120 Z" fill="#4a64d0"/><path d="M49 114 L53 112 L57 114 L53 116 Z" fill="#90a8f0"/><rect x="52" y="119" width="2.5" height="2" fill="#f0f0f0"/>
<path d="M64 113.5 V119 M67 113.5 V119 M70 113.5 V119 M72.5 113.5 V119" stroke="#e8e8e8" stroke-width="1.1"/><rect x="63.5" y="119" width="9.5" height="1.8" fill="#e0e0e0"/>
<path d="M15.00 124.00 L12.20 124.00 L15.00 121.20 Z" fill="#9c9c9c"/>
<path d="M30.00 124.00 L27.20 124.00 L30.00 121.20 Z" fill="#9c9c9c"/>
<path d="M45.00 124.00 L42.20 124.00 L45.00 121.20 Z" fill="#9c9c9c"/>
<path d="M60.00 124.00 L57.20 124.00 L60.00 121.20 Z" fill="#9c9c9c"/>
<path d="M75.00 124.00 L72.20 124.00 L75.00 121.20 Z" fill="#9c9c9c"/>
<rect x="4" y="126.5" width="10" height="10" fill="#2a3060"/>
<rect x="4.5" y="127.5" width="1.8" height="1.2" fill="#c0c8f0"/>
<rect x="8.5" y="127.5" width="1.8" height="1.2" fill="#c0c8f0"/>
<rect x="12" y="127.5" width="1.8" height="1.2" fill="#c0c8f0"/>
<rect x="4.5" y="131.3" width="1.8" height="1.2" fill="#c0c8f0"/>
<rect x="8.5" y="131.3" width="1.8" height="1.2" fill="#c0c8f0"/>
<rect x="12" y="131.3" width="1.8" height="1.2" fill="#c0c8f0"/>
<rect x="4.5" y="135" width="1.8" height="1.2" fill="#c0c8f0"/>
<rect x="8.5" y="135" width="1.8" height="1.2" fill="#c0c8f0"/>
<rect x="12" y="135" width="1.8" height="1.2" fill="#c0c8f0"/>
<rect x="21" y="126.5" width="2" height="10" fill="#c03030"/><rect x="24" y="126.5" width="2" height="10" fill="#c03030"/><rect x="21.5" y="129" width="4.5" height="1" fill="#f0c0c0"/><rect x="21.5" y="133" width="4.5" height="1" fill="#f0c0c0"/>
<path d="M34 128 L36 127 L36 134.5 L34 135.5 Z" fill="#e8f0e0"/><path d="M37.5 134 L40 127 L42.6 128 L40 135 Z" fill="#7a88e8"/>
<path d="M51 126 V137 M48 129 L57.5 133 M48 133 L57.5 129" stroke="#707890" stroke-width="1"/>
<path d="M63.5 131 L66.5 135 L73.5 127" fill="none" stroke="#eeeeee" stroke-width="1.5"/>
<path d="M15.00 139.00 L12.20 139.00 L15.00 136.20 Z" fill="#9c9c9c"/>
<path d="M30.00 139.00 L27.20 139.00 L30.00 136.20 Z" fill="#9c9c9c"/>
<path d="M45.00 139.00 L42.20 139.00 L45.00 136.20 Z" fill="#9c9c9c"/>
<path d="M60.00 139.00 L57.20 139.00 L60.00 136.20 Z" fill="#9c9c9c"/>
<path d="M75.00 139.00 L72.20 139.00 L75.00 136.20 Z" fill="#9c9c9c"/>
<circle cx="6.5" cy="146.5" r="2.8" fill="#d8d8d8"/><path d="M8.5 150.5 L10.5 146.5 L12.5 150.5 Z" fill="#e8e8e8"/>
<path d="M19.5 148.5 L23 144.5 L27.5 146 L27.5 150 L23.5 152 Z" fill="#b8a838"/><path d="M21 148 L23.5 145.5 L25.5 147.5 L23 149.5 Z" fill="#f0e888"/><path d="M25 142 L27.5 141.5 L27.5 143 Z" fill="#d8e8e0"/>
<path d="M15.00 154.00 L12.20 154.00 L15.00 151.20 Z" fill="#9c9c9c"/>
<path d="M30.00 154.00 L27.20 154.00 L30.00 151.20 Z" fill="#9c9c9c"/>
<rect x="2.9" y="283.80" width="6.8" height="6.6" fill="#4c4c4c" stroke="#5c5c5c" stroke-width="0.6"/>
<path d="M3.9 287.70 L5.8 289.40 L8.7 285.60" fill="none" stroke="#f0f0f0" stroke-width="1.1"/>
<text x="13" y="289.70" font-size="7" fill="#e0e0e0" stroke="#e0e0e0" stroke-width="0.22" font-family="Liberation Sans" textLength="10" lengthAdjust="spacingAndGlyphs">End</text>
<rect x="2.9" y="292.42" width="6.8" height="6.6" fill="#4c4c4c" stroke="#5c5c5c" stroke-width="0.6"/>
<path d="M3.9 296.32 L5.8 298.02 L8.7 294.22" fill="none" stroke="#f0f0f0" stroke-width="1.1"/>
<text x="13" y="298.32" font-size="7" fill="#e0e0e0" stroke="#e0e0e0" stroke-width="0.22" font-family="Liberation Sans" textLength="13" lengthAdjust="spacingAndGlyphs">Near</text>
<rect x="2.9" y="301.04" width="6.8" height="6.6" fill="#4c4c4c" stroke="#5c5c5c" stroke-width="0.6"/>
<path d="M3.9 304.94 L5.8 306.64 L8.7 302.84" fill="none" stroke="#f0f0f0" stroke-width="1.1"/>
<text x="13" y="306.94" font-size="7" fill="#e0e0e0" stroke="#e0e0e0" stroke-width="0.22" font-family="Liberation Sans" textLength="14.6" lengthAdjust="spacingAndGlyphs">Point</text>
<rect x="2.9" y="309.66" width="6.8" height="6.6" fill="#4c4c4c" stroke="#5c5c5c" stroke-width="0.6"/>
<path d="M3.9 313.56 L5.8 315.26 L8.7 311.46" fill="none" stroke="#f0f0f0" stroke-width="1.1"/>
<text x="13" y="315.56" font-size="7" fill="#e0e0e0" stroke="#e0e0e0" stroke-width="0.22" font-family="Liberation Sans" textLength="10.8" lengthAdjust="spacingAndGlyphs">Mid</text>
<rect x="2.9" y="318.28" width="6.8" height="6.6" fill="#4c4c4c" stroke="#5c5c5c" stroke-width="0.6"/>
<text x="13" y="324.18" font-size="7" fill="#e0e0e0" stroke="#e0e0e0" stroke-width="0.22" font-family="Liberation Sans" textLength="11.2" lengthAdjust="spacingAndGlyphs">Cen</text>
<rect x="2.9" y="326.90" width="6.8" height="6.6" fill="#4c4c4c" stroke="#5c5c5c" stroke-width="0.6"/>
<text x="13" y="332.80" font-size="7" fill="#e0e0e0" stroke="#e0e0e0" stroke-width="0.22" font-family="Liberation Sans" textLength="7" lengthAdjust="spacingAndGlyphs">Int</text>
<rect x="2.9" y="335.52" width="6.8" height="6.6" fill="#4c4c4c" stroke="#5c5c5c" stroke-width="0.6"/>
<text x="13" y="341.42" font-size="7" fill="#e0e0e0" stroke="#e0e0e0" stroke-width="0.22" font-family="Liberation Sans" textLength="12" lengthAdjust="spacingAndGlyphs">Perp</text>
<rect x="2.9" y="344.14" width="6.8" height="6.6" fill="#4c4c4c" stroke="#5c5c5c" stroke-width="0.6"/>
<text x="13" y="350.04" font-size="7" fill="#e0e0e0" stroke="#e0e0e0" stroke-width="0.22" font-family="Liberation Sans" textLength="9.2" lengthAdjust="spacingAndGlyphs">Tan</text>
<rect x="2.9" y="352.76" width="6.8" height="6.6" fill="#4c4c4c" stroke="#5c5c5c" stroke-width="0.6"/>
<text x="13" y="358.66" font-size="7" fill="#e0e0e0" stroke="#e0e0e0" stroke-width="0.22" font-family="Liberation Sans" textLength="14.5" lengthAdjust="spacingAndGlyphs">Quad</text>
<rect x="2.9" y="361.38" width="6.8" height="6.6" fill="#4c4c4c" stroke="#5c5c5c" stroke-width="0.6"/>
<text x="13" y="367.28" font-size="7" fill="#e0e0e0" stroke="#e0e0e0" stroke-width="0.22" font-family="Liberation Sans" textLength="12.5" lengthAdjust="spacingAndGlyphs">Knot</text>
<rect x="2.9" y="370.00" width="6.8" height="6.6" fill="#4c4c4c" stroke="#5c5c5c" stroke-width="0.6"/>
<path d="M3.9 373.90 L5.8 375.60 L8.7 371.80" fill="none" stroke="#f0f0f0" stroke-width="1.1"/>
<text x="13" y="375.90" font-size="7" fill="#e0e0e0" stroke="#e0e0e0" stroke-width="0.22" font-family="Liberation Sans" textLength="16" lengthAdjust="spacingAndGlyphs">Vertex</text>
<rect x="2.9" y="378.62" width="6.8" height="6.6" fill="#4c4c4c" stroke="#5c5c5c" stroke-width="0.6"/>
<text x="13" y="384.52" font-size="7" fill="#e0e0e0" stroke="#e0e0e0" stroke-width="0.22" font-family="Liberation Sans" textLength="19" lengthAdjust="spacingAndGlyphs">Project</text>
<rect x="2.9" y="387.24" width="6.8" height="6.6" fill="#4c4c4c" stroke="#5c5c5c" stroke-width="0.6"/>
<text x="13" y="393.14" font-size="7" fill="#e0e0e0" stroke="#e0e0e0" stroke-width="0.22" font-family="Liberation Sans" textLength="20" lengthAdjust="spacingAndGlyphs">Disable</text>
<circle cx="10" cy="275.5" r="2.6" fill="none" stroke="#b0b0b0" stroke-width="0.8"/><path d="M8.5 275.5 H11.5" stroke="#d0d0d0" stroke-width="0.9"/>
<path d="M26.5 279 L29 275 M28 276 L30 273.5 M30 273.5 L31.5 274" stroke="#c8c8c8" stroke-width="0.8"/><circle cx="29" cy="275.5" r="0.9" fill="#e0e0e0"/>
<polygon points="81.60,265.20 80.62,266.08 80.69,267.39 79.38,267.32 78.50,268.30 77.62,267.32 76.31,267.39 76.38,266.08 75.40,265.20 76.38,264.32 76.31,263.01 77.62,263.08 78.50,262.10 79.38,263.08 80.69,263.01 80.62,264.32" fill="#d0d0d0"/><circle cx="78.5" cy="265.2" r="1" fill="#333"/>
<polygon points="1020.90,34.20 1019.92,35.08 1019.99,36.39 1018.68,36.32 1017.80,37.30 1016.92,36.32 1015.61,36.39 1015.68,35.08 1014.70,34.20 1015.68,33.32 1015.61,32.01 1016.92,32.08 1017.80,31.10 1018.68,32.08 1019.99,32.01 1019.92,33.32" fill="#d0d0d0"/><circle cx="1017.8" cy="34.2" r="1" fill="#333"/>
<polygon points="1020.70,5.20 1019.72,6.08 1019.79,7.39 1018.48,7.32 1017.60,8.30 1016.72,7.32 1015.41,7.39 1015.48,6.08 1014.50,5.20 1015.48,4.32 1015.41,3.01 1016.72,3.08 1017.60,2.10 1018.48,3.08 1019.79,3.01 1019.72,4.32" fill="#d0d0d0"/><circle cx="1017.6" cy="5.2" r="1" fill="#333"/>
<path d="M768 52 C768 46 770 44 771.5 44 C773 44 775 46 775.5 52 Z" fill="#e8e070"/><circle cx="772" cy="50.5" r="2.1" fill="#f8f8f8"/><path d="M771 50.5 L772 49 L773 50.5 L772 52 Z" fill="#202020"/>
<path d="M781 45 H787.5 L785 48.5 V53 L783.5 51.5 V48.5 Z" fill="#7888e8"/>
<rect x="783" y="58" width="0.7" height="11" fill="#343434"/>
<rect x="811" y="58" width="0.7" height="11" fill="#343434"/>
<rect x="832.5" y="58" width="0.7" height="11" fill="#343434"/>
<rect x="849.5" y="58" width="0.7" height="11" fill="#343434"/>
<rect x="877" y="58" width="0.7" height="11" fill="#343434"/>
<rect x="898" y="58" width="0.7" height="11" fill="#343434"/>
<rect x="922" y="58" width="0.7" height="11" fill="#343434"/>
<rect x="969" y="58" width="0.7" height="11" fill="#343434"/>
<text x="786" y="65.8" font-size="7" fill="#d4d4d4" font-family="Liberation Sans" textLength="17" lengthAdjust="spacingAndGlyphs">Name</text>
<text x="814.7" y="65.8" font-size="7" fill="#d4d4d4" font-family="Liberation Sans" textLength="15.5" lengthAdjust="spacingAndGlyphs">Isolat</text>
<text x="834.5" y="65.8" font-size="7" fill="#d4d4d4" font-family="Liberation Sans" textLength="12" lengthAdjust="spacingAndGlyphs">Type</text>
<text x="852.3" y="65.8" font-size="7" fill="#d4d4d4" font-family="Liberation Sans" textLength="22.7" lengthAdjust="spacingAndGlyphs">Intensity</text>
<text x="879" y="65.8" font-size="7" fill="#d4d4d4" font-family="Liberation Sans" textLength="15" lengthAdjust="spacingAndGlyphs">Color</text>
<text x="900" y="65.8" font-size="7" fill="#d4d4d4" font-family="Liberation Sans" textLength="15" lengthAdjust="spacingAndGlyphs">Layer</text>
<text x="927" y="65.8" font-size="7" fill="#d4d4d4" font-family="Liberation Sans" textLength="17" lengthAdjust="spacingAndGlyphs">Falloff</text>
<circle cx="778.4" cy="73.80" r="2.9" fill="#e8d858"/><rect x="777" y="75.80" width="2.8" height="2.8" fill="#e8d858"/>
<text x="783.5" y="77.80" font-size="7" fill="#dedede" font-family="Liberation Sans" textLength="11" lengthAdjust="spacingAndGlyphs">Sun</text>
<circle cx="778.4" cy="84.50" r="2.9" fill="#98a8e8"/><rect x="777" y="86.50" width="2.8" height="2.8" fill="#98a8e8"/>
<text x="783.5" y="88.50" font-size="7" fill="#dedede" font-family="Liberation Sans" textLength="22.5" lengthAdjust="spacingAndGlyphs">Skylight</text>
<circle cx="778.4" cy="95.10" r="2.9" fill="#e8d858"/><rect x="777" y="97.10" width="2.8" height="2.8" fill="#e8d858"/>
<text x="783.5" y="99.10" font-size="7" fill="#dedede" font-family="Liberation Sans" textLength="28" lengthAdjust="spacingAndGlyphs">Unnamed</text>
<path d="M837.5 77 L842 72.5 L844 74 L840 78.5 Z" fill="#c8c090"/><rect x="842.5" y="71" width="1.5" height="1.5" fill="#d8a040"/>
<rect x="818.4" y="93" width="6.8" height="7" fill="#5a5a5a" stroke="#6a6a6a" stroke-width="0.5"/>
<ellipse cx="840.3" cy="96.8" rx="3.2" ry="2.8" fill="#c8b888"/>
<rect x="850" y="70.6" width="25.5" height="9.2" fill="#5c5c5c"/>
<text x="852" y="78" font-size="7" fill="#d8d8d8" font-family="Liberation Sans" textLength="11.5" lengthAdjust="spacingAndGlyphs">1.00</text>
<rect x="877" y="71" width="19" height="9" fill="#f8f8ff"/>
<rect x="850" y="91.8" width="25.5" height="9.4" fill="#5c5c5c"/>
<text x="852" y="99.3" font-size="7" fill="#d8d8d8" font-family="Liberation Sans" textLength="11.5" lengthAdjust="spacingAndGlyphs">5.92</text>
<rect x="877" y="92" width="19" height="9" fill="#f010d8"/>
<text x="898" y="99.3" font-size="7" fill="#dedede" font-family="Liberation Sans" textLength="20" lengthAdjust="spacingAndGlyphs">Default</text>
<path d="M943 96.2 H949 M947.5 94.5 L950.5 96.2 L947.5 97.9 Z" stroke="#e8e8e8" stroke-width="1" fill="#e8e8e8"/>
<path d="M1020.5 46.5 A3.2 3 0 1 0 1020.5 51" stroke="#d84a50" stroke-width="1.8" fill="none"/><ellipse cx="1018" cy="48.8" rx="1.6" ry="1" fill="#f0d0d0"/>
<circle cx="1017.5" cy="67.5" r="3" fill="#f0f0f0" stroke="url(#cw)" stroke-width="1.8"/>
<rect x="1014.5" y="83.5" width="6" height="5" fill="#e0e0e0"/>
<rect x="1014" y="103" width="7" height="6" fill="#5070d0"/><path d="M1014.5 108 L1018 104.5 L1020.5 107" stroke="#c0d0ff" stroke-width="0.8" fill="none"/>
<circle cx="1019" cy="123.5" r="2.3" fill="#e8c040"/><path d="M1017.5 125 L1014.5 128" stroke="#e8c040" stroke-width="1.3"/>
</svg>
</div></body></html>
